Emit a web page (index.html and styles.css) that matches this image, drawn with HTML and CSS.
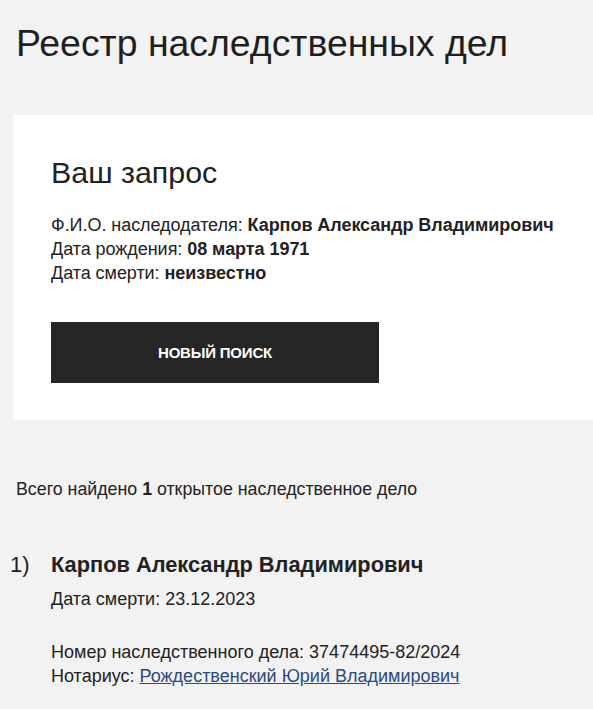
FILE: index.html
```html
<!DOCTYPE html>
<html lang="ru">
<head>
<meta charset="utf-8">
<title>Реестр наследственных дел</title>
<link rel="stylesheet" href="styles.css">
</head>
<body>
<div class="page">
  <h1 class="title">Реестр наследственных дел</h1>
  <section class="card">
    <h2 class="card-title">Ваш запрос</h2>
    <div class="query">
      <div>Ф.И.О. наследодателя: <b>Карпов Александр Владимирович</b></div>
      <div>Дата рождения: <b>08 марта 1971</b></div>
      <div>Дата смерти: <b>неизвестно</b></div>
    </div>
    <button class="btn">НОВЫЙ ПОИСК</button>
  </section>
  <p class="total">Всего найдено <b>1</b> открытое наследственное дело</p>
  <div class="result">
    <div class="num">1)</div>
    <div class="body">
      <div class="name">Карпов Александр Владимирович</div>
      <div class="line">Дата смерти: 23.12.2023</div>
      <div class="details">
        <div>Номер наследственного дела: 37474495-82/2024</div>
        <div>Нотариус: <a href="#" class="link">Рождественский Юрий Владимирович</a></div>
      </div>
    </div>
  </div>
</div>
</body>
</html>
```
FILE: styles.css
```css
html, body {
  margin: 0;
  padding: 0;
  background: #f2f2f2;
}
body {
  font-family: "Liberation Sans", Arial, sans-serif;
  color: #222;
  overflow: hidden;
}
.title {
  margin: 0;
  padding: 21px 0 0 16px;
  font-size: 37.4px;
  font-weight: normal;
  line-height: 44px;
  color: #1f1f1f;
}
.card {
  background: #fff;
  margin: 50px 0 0 13px;
  padding: 39px 0 37px 38px;
}
.card-title {
  margin: 0;
  font-size: 30.4px;
  font-weight: normal;
  line-height: 36px;
}
.query {
  margin-top: 23px;
  font-size: 18px;
  line-height: 24px;
  letter-spacing: -0.05px;
}
.btn {
  display: block;
  margin-top: 37px;
  width: 328px;
  height: 61px;
  padding: 0;
  border: 0;
  background: #262626;
  color: #fff;
  font-family: "Liberation Sans", Arial, sans-serif;
  font-weight: bold;
  font-size: 15px;
  letter-spacing: -0.2px;
}
.total {
  margin: 57px 0 0 16px;
  font-size: 17.8px;
  line-height: 24px;
}
.result {
  display: flex;
  margin-top: 50px;
}
.num {
  width: 51px;
  flex: none;
  padding-left: 10px;
  box-sizing: border-box;
  font-size: 22px;
  line-height: 28px;
}
.name {
  font-size: 21.8px;
  font-weight: bold;
  line-height: 28px;
}
.line {
  margin-top: 8px;
  font-size: 18px;
  line-height: 24px;
}
.details {
  margin-top: 29px;
  font-size: 18px;
  line-height: 24px;
}
.link {
  color: #2b4a80;
  text-decoration: underline;
}
```
